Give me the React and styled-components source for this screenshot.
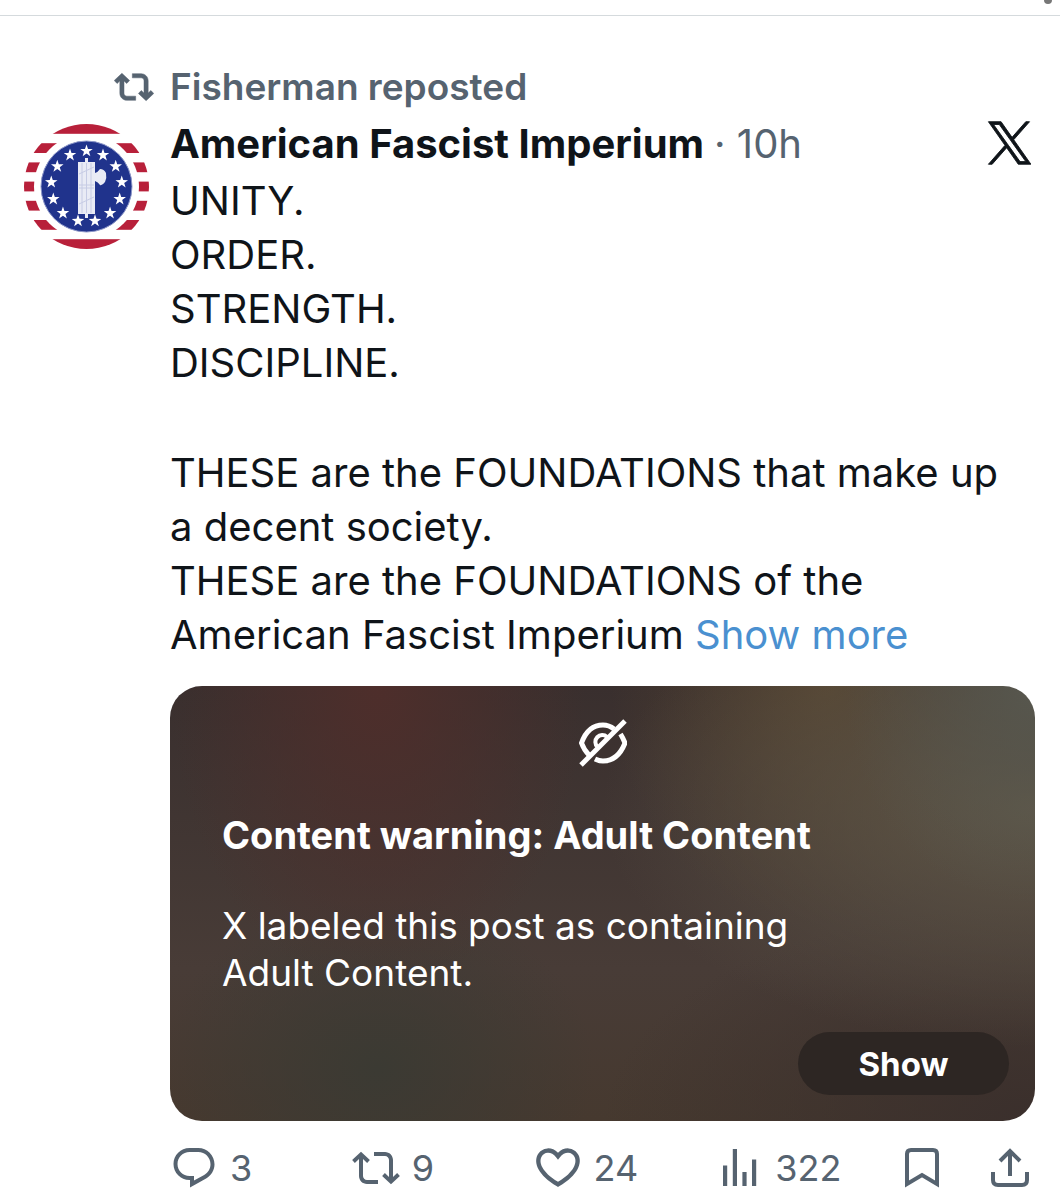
import styled, { createGlobalStyle } from "styled-components";

const GlobalStyle = createGlobalStyle`
  * {
    box-sizing: border-box;
  }
  body {
    margin: 0;
    background: #fff;
    color: #0f1419;
    font-family: Inter, "Liberation Sans", sans-serif;
    overflow-x: hidden;
  }
  p, h1, h2 {
    margin: 0;
  }
`;

const actions = [
  { name: "Reply", count: "3", icon: <ReplyIcon /> },
  { name: "Repost", count: "9", icon: <RepostIcon /> },
  { name: "Like", count: "24", icon: <HeartIcon /> },
  { name: "Views", count: "322", icon: <ViewsIcon /> },
  { name: "Bookmark", icon: <BookmarkIcon /> },
  { name: "Share", icon: <ShareIcon /> },
];

export default function App() {
  return (
    <>
      <GlobalStyle />
      <PreviousPost>
        <MoreDot />
      </PreviousPost>
      <Post>
        <RepostMark>
          <RepostBoldIcon />
        </RepostMark>
        <RepostedBy>Fisherman reposted</RepostedBy>
        <Avatar />
        <Content>
          <Header>
            <Author>American Fascist Imperium</Author>
            <Time>· 10h</Time>
            <XLink href="#x" aria-label="X">
              <XLogo />
            </XLink>
          </Header>
          <Text>
            <p>UNITY.</p>
            <p>ORDER.</p>
            <p>STRENGTH.</p>
            <p>DISCIPLINE.</p>
          </Text>
          <Text>
            <p>THESE are the FOUNDATIONS that make up a decent society.</p>
            <p>THESE are the FOUNDATIONS of the</p>
            <p>
              <span>American Fascist Imperium</span> <a href="#more">Show more</a>
            </p>
          </Text>
          <Warning>
            <HiddenIcon />
            <h2>Content warning: Adult Content</h2>
            <p>X labeled this post as containing Adult Content.</p>
            <ShowButton type="button">Show</ShowButton>
          </Warning>
          <Actions>
            {actions.map((a) => (
              <Action key={a.name} type="button" aria-label={a.name}>
                {a.icon}
                {a.count && <span>{a.count}</span>}
              </Action>
            ))}
          </Actions>
        </Content>
      </Post>
    </>
  );
}

function RepostBoldIcon() {
  return (
    <svg width="40" height="40" viewBox="0 0 24 24" fill="currentColor" stroke="currentColor" strokeWidth=".3">
      <path d="M4.75 3.79l4.603 4.3-1.706 1.82L6 8.38v7.37c0 .97.784 1.75 1.75 1.75H13V20H7.75c-2.347 0-4.25-1.9-4.25-4.25V8.38L1.853 9.91.147 8.09l4.603-4.3zm11.5 2.71H11V4h5.25c2.347 0 4.25 1.9 4.25 4.25v7.37l1.647-1.53 1.706 1.82-4.603 4.3-4.603-4.3 1.706-1.82L18 15.62V8.25c0-.97-.784-1.75-1.75-1.75z" />
    </svg>
  );
}

function RepostIcon() {
  return (
    <svg width="48" height="48" viewBox="0 0 24 24" fill="currentColor">
      <path d="M4.5 3.88l4.432 4.14-1.364 1.46L5.5 7.55V16c0 1.1.896 2 2 2H13v2H7.5c-2.209 0-4-1.79-4-4V7.55L1.432 9.48.068 8.02 4.5 3.88zM16.5 6H11V4h5.5c2.209 0 4 1.79 4 4v8.45l2.068-1.93 1.364 1.46-4.432 4.14-4.432-4.14 1.364-1.46 2.068 1.93V8c0-1.1-.896-2-2-2z" />
    </svg>
  );
}

function ReplyIcon() {
  return (
    <svg width="48" height="48" viewBox="0 0 24 24" fill="currentColor">
      <path d="M1.751 10c0-4.42 3.584-8 8.005-8h4.366c4.49 0 8.129 3.64 8.129 8.13 0 2.96-1.607 5.68-4.196 7.11l-8.054 4.46v-3.69h-.067c-4.49.1-8.183-3.51-8.183-8.01zm8.005-6c-3.317 0-6.005 2.69-6.005 6 0 3.37 2.77 6.08 6.138 6.01l.351-.01h1.761v2.3l5.087-2.81c1.951-1.08 3.163-3.13 3.163-5.36 0-3.39-2.744-6.13-6.129-6.13H9.756z" />
    </svg>
  );
}

function HeartIcon() {
  return (
    <svg width="48" height="48" viewBox="1 1.5 22 22" fill="currentColor">
      <path d="M16.697 5.5c-1.222-.06-2.679.51-3.89 2.16l-.805 1.09-.806-1.09C9.984 6.01 8.526 5.44 7.304 5.5c-1.243.07-2.349.78-2.91 1.91-.552 1.12-.633 2.78.479 4.82 1.074 1.97 3.257 4.27 7.129 6.61 3.87-2.34 6.052-4.64 7.126-6.61 1.111-2.04 1.03-3.7.477-4.82-.561-1.13-1.666-1.84-2.908-1.91zm4.187 7.69c-1.351 2.48-4.001 5.12-8.379 7.67l-.503.3-.504-.3c-4.379-2.55-7.029-5.19-8.382-7.67-1.36-2.5-1.41-4.86-.514-6.67.887-1.79 2.647-2.91 4.601-3.01 1.651-.09 3.368.56 4.798 2.01 1.429-1.45 3.146-2.1 4.796-2.01 1.954.1 3.714 1.22 4.601 3.01.896 1.81.846 4.17-.514 6.67z" />
    </svg>
  );
}

function ViewsIcon() {
  return (
    <svg width="48" height="48" viewBox="0 0 24 24" fill="currentColor">
      <path d="M8.9 21V2.500h2.100V21H8.900zM18.500 21V7.700h2.100V21h-2.100zM4 21V10.800h2.100V21H4zm9.700 0v-7h2.100v7h-2.100z" />
    </svg>
  );
}

function BookmarkIcon() {
  return (
    <svg width="48" height="48" viewBox="0 0 48 48" fill="none" stroke="currentColor" strokeWidth="4">
      <path d="M10 40V10q0-4 4-4h22q4 0 4 4v30l-15-9z" />
    </svg>
  );
}

function ShareIcon() {
  return (
    <svg width="48" height="48" viewBox="0 0 48 48" fill="none" stroke="currentColor" strokeWidth="4">
      <path d="M23 32V7M13 17L23 7l10 10M6 28v8q0 5 5 5h24q5 0 5-5v-8" />
    </svg>
  );
}

function XLogo() {
  return (
    <svg width="44" height="44" viewBox="-.4 -.4 24 24.800" fill="currentColor" stroke="currentColor" strokeWidth=".5">
      <path d="M14.258 10.152L23.176 0h-2.113l-7.747 8.813L7.133 0H0l9.352 13.328L0 23.973h2.113l8.176-9.309 6.531 9.309h7.133zm-2.895 3.293l-.949-1.328L2.875 1.56h3.246l6.086 8.523.945 1.328 7.91 11.078h-3.246z" />
    </svg>
  );
}

function HiddenIcon() {
  return (
    <svg width="48" height="48" viewBox="0 0 48 48" fill="none" stroke="currentColor" strokeWidth="5">
      <path d="M10 36Q5 31 2.500 24Q9 6 24 6Q30 6 35 10" />
      <path d="M41.500 15Q44 19 46 24Q39 42 24 42Q20 42 16 40" />
      <path d="M18.500 28A6.500 6.500 0 1 1 28 18" strokeWidth="4" />
      <path d="M46 2L2 46" />
    </svg>
  );
}

function Avatar() {
  const star = Array.from({ length: 10 }, (_, i) => {
    const r = i % 2 ? 2.6 : 6.6;
    const t = (i * Math.PI) / 5;
    return `${r * Math.sin(t)},${-r * Math.cos(t)}`;
  }).join(" ");
  return (
    <AvatarSvg viewBox="0 0 125 125" role="img" aria-label="American Fascist Imperium">
      <clipPath id="round">
        <circle cx="62.5" cy="62.5" r="62.5" />
      </clipPath>
      <g clipPath="url(#round)">
        <rect width="125" height="125" fill="#fff" />
        {[0, 2, 4, 6, 8, 10, 12].map((n) => (
          <rect key={n} y={n * 9.6} width="125" height="9.8" fill="#b8203a" />
        ))}
        <circle cx="62.5" cy="62.5" r="52.5" fill="#fff" />
        <circle cx="62.5" cy="62.5" r="45.5" fill="#20338c" stroke="#8d97c8" strokeWidth="1" />
        {Array.from({ length: 13 }, (_, i) => {
          const t = (i * 2 * Math.PI) / 13;
          return (
            <polygon
              key={i}
              points={star}
              fill="#fff"
              transform={`translate(${62.5 + 35.5 * Math.sin(t)} ${62.5 - 35.5 * Math.cos(t)})`}
            />
          );
        })}
        <path d="M61 34h3v4h7v11q3-1 5-4 4 0 6 4 1 5-1 9-3 4-5 3-2-3-5-4v33h-7v4h-3v-4h-7V38h7z" fill="#e9ebf5" />
        <path d="M58 39v50M62.500 39v50M67 39v50M55 50l15-7M55 61h15M55 64h15M55 80l15-7" stroke="#c6cbe4" fill="none" />
      </g>
    </AvatarSvg>
  );
}

const PreviousPost = styled.div`
  display: flex;
  justify-content: flex-end;
  height: 16px;
  padding-right: 8px;
  border-bottom: 1px solid #d5dadd;
`;

const MoreDot = styled.span`
  width: 8px;
  height: 4px;
  border-radius: 0 0 4px 4px;
  background: #777;
`;

const Post = styled.article`
  display: grid;
  grid-template-columns: 130px 1fr;
  column-gap: 16px;
  padding: 46px 25px 0 24px;
`;

const RepostMark = styled.span`
  display: flex;
  align-items: center;
  justify-content: flex-end;
  color: #566370;
`;

const RepostedBy = styled.p`
  font-size: 37px;
  font-weight: 600;
  line-height: 50px;
  color: #566370;
`;

const AvatarSvg = styled.svg`
  width: 125px;
  height: 125px;
  margin-top: 12px;
`;

const Content = styled.div`
  min-width: 0;
`;

const Header = styled.header`
  display: flex;
  align-items: center;
  height: 62px;
  font-size: 40px;
`;

const Author = styled.h1`
  font-size: 40px;
  font-weight: 700;
  white-space: nowrap;
`;

const Time = styled.span`
  margin-left: 10px;
  color: #566370;
  white-space: nowrap;
`;

const XLink = styled.a`
  display: flex;
  margin-left: auto;
  padding-right: 4px;
  color: inherit;
`;

const Text = styled.div`
  padding-right: 24px;
  font-size: 40px;
  line-height: 54px;

  & + & {
    margin-top: 56px;
  }
  a {
    color: #4a90d0;
    text-decoration: none;
  }
`;

const Warning = styled.section`
  display: flex;
  flex-direction: column;
  margin-top: 24px;
  padding: 33px 26px 26px 52px;
  border-radius: 32px;
  color: #fff;
  background:
    radial-gradient(ellipse 24% 70% at 24% 0%, #4e2e2b, transparent),
    radial-gradient(ellipse 22% 50% at 100% 0%, #57574e, transparent),
    radial-gradient(ellipse 50% 55% at 100% 28%, #5f5748, transparent),
    radial-gradient(ellipse 25% 55% at 76% 0%, #544330, transparent),
    radial-gradient(ellipse 25% 40% at 24% 88%, #3b3a33, transparent),
    radial-gradient(ellipse 50% 50% at 100% 100%, #3a2f2c, transparent),
    linear-gradient(#392f2e, #483c37 65%, #46392f);

  > svg {
    align-self: center;
    margin-right: 26px;
  }
  h2 {
    margin-top: 44px;
    font-size: 38px;
    font-weight: 700;
    line-height: 48px;
  }
  p {
    max-width: 620px;
    margin-top: 43px;
    font-size: 37px;
    line-height: 47px;
  }
`;

const ShowButton = styled.button`
  align-self: flex-end;
  width: 211px;
  height: 63px;
  margin-top: 36px;
  border: 0;
  border-radius: 32px;
  background: #2d2623;
  color: #fff;
  font: inherit;
  font-size: 33px;
  font-weight: 700;
`;

const Actions = styled.div`
  display: grid;
  grid-template-columns: repeat(4, 1fr) 90px 48px;
  margin-top: 22px;
`;

const Action = styled.button`
  display: flex;
  align-items: center;
  gap: 12px;
  height: 50px;
  padding: 0;
  border: 0;
  background: none;
  color: #566370;
  font: inherit;
  font-size: 36px;

  svg {
    flex: none;
  }
`;
